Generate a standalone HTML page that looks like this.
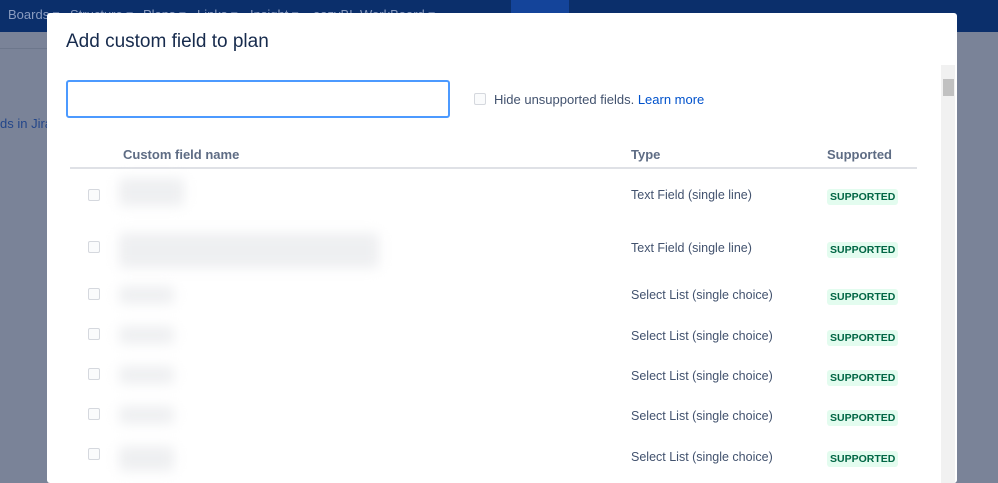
<!DOCTYPE html>
<html><head><style>
body{margin:0;width:998px;height:468px;overflow:hidden;background:#7a8398;font-family:"Liberation Sans",sans-serif;position:relative}
.nav{position:absolute;left:0;top:0;width:998px;height:32px;background:#0b2f6b;color:#8a9cc0;font-size:13px}
.nav span{position:absolute;top:7px}
.create{position:absolute;left:511px;top:0;width:58px;height:32px;background:#14449a}
.side{position:absolute;left:0;top:48px;width:47px;height:1px;background:#6d778c}
.jira{position:absolute;left:0;top:116px;font-size:13px;color:#23468a}
.modal{position:absolute;left:47px;top:13px;width:910px;height:470px;background:#fff;border-radius:3px}
h1{position:absolute;left:19px;top:18px;margin:0;font-size:19px;font-weight:normal;color:#172b4d}
.inp{position:absolute;left:19px;top:67px;width:380px;height:34px;border:2px solid #4c9aff;border-radius:3px}
.cb{position:absolute;width:10px;height:10px;border:1px solid #d5d8de;border-radius:2px;background:#fafbfc}
.hide{position:absolute;left:447px;top:79px;font-size:13px;color:#42526e}
.hide a{color:#0052cc}
.th{position:absolute;top:134px;font-size:13px;font-weight:bold;color:#5e6c84}
.hr{position:absolute;left:23px;top:154px;width:847px;height:2px;background:#dfe1e6}
.type{position:absolute;left:584px;font-size:12.5px;color:#42526e}
.lz{position:absolute;left:780px;font-size:10.5px;font-weight:bold;color:#006644;background:#e3fcef;padding:2px 3px;border-radius:3px}
.blur{position:absolute;left:72px;background:#eeeff1;filter:blur(6px);border-radius:4px}
.sb{position:absolute;left:894px;top:52px;width:14px;height:418px;background:#f1f1f1}
.thumb{position:absolute;left:896px;top:66px;width:11px;height:17px;background:#c1c1c1}
</style></head><body>
<div class="nav"><span style="left:8px">Boards ▾</span><span style="left:70px">Structure ▾</span><span style="left:143px">Plans ▾</span><span style="left:197px">Links ▾</span><span style="left:250px">Insight ▾</span><span style="left:313px">eazyBI</span><span style="left:360px">WorkBoard ▾</span></div>
<div class="create"></div>
<div class="side"></div><div class="jira">ds in Jira</div>
<div class="modal">
<h1>Add custom field to plan</h1>
<div class="inp"></div>
<div class="cb" style="left:427px;top:80px"></div>
<div class="hide">Hide unsupported fields. <a>Learn more</a></div>
<div class="th" style="left:76px">Custom field name</div>
<div class="th" style="left:584px">Type</div>
<div class="th" style="left:780px">Supported</div>
<div class="hr"></div>
<div class="blur" style="top:165px;width:65px;height:28px"></div>
<div class="blur" style="top:220px;width:260px;height:35px"></div>
<div class="blur" style="top:273px;width:55px;height:18px"></div>
<div class="blur" style="top:313px;width:55px;height:18px"></div>
<div class="blur" style="top:353px;width:55px;height:18px"></div>
<div class="blur" style="top:393px;width:55px;height:18px"></div>
<div class="blur" style="top:433px;width:55px;height:25px"></div>
<div class="cb" style="left:41px;top:176px"></div><div class="type" style="top:175px">Text Field (single line)</div><div class="lz" style="top:176px">SUPPORTED</div>
<div class="cb" style="left:41px;top:228px"></div><div class="type" style="top:228px">Text Field (single line)</div><div class="lz" style="top:229px">SUPPORTED</div>
<div class="cb" style="left:41px;top:275px"></div><div class="type" style="top:275px">Select List (single choice)</div><div class="lz" style="top:276px">SUPPORTED</div>
<div class="cb" style="left:41px;top:315px"></div><div class="type" style="top:316px">Select List (single choice)</div><div class="lz" style="top:317px">SUPPORTED</div>
<div class="cb" style="left:41px;top:355px"></div><div class="type" style="top:356px">Select List (single choice)</div><div class="lz" style="top:357px">SUPPORTED</div>
<div class="cb" style="left:41px;top:395px"></div><div class="type" style="top:396px">Select List (single choice)</div><div class="lz" style="top:397px">SUPPORTED</div>
<div class="cb" style="left:41px;top:435px"></div><div class="type" style="top:437px">Select List (single choice)</div><div class="lz" style="top:438px">SUPPORTED</div>
<div class="sb"></div><div class="thumb"></div>
</div>
</body></html>
